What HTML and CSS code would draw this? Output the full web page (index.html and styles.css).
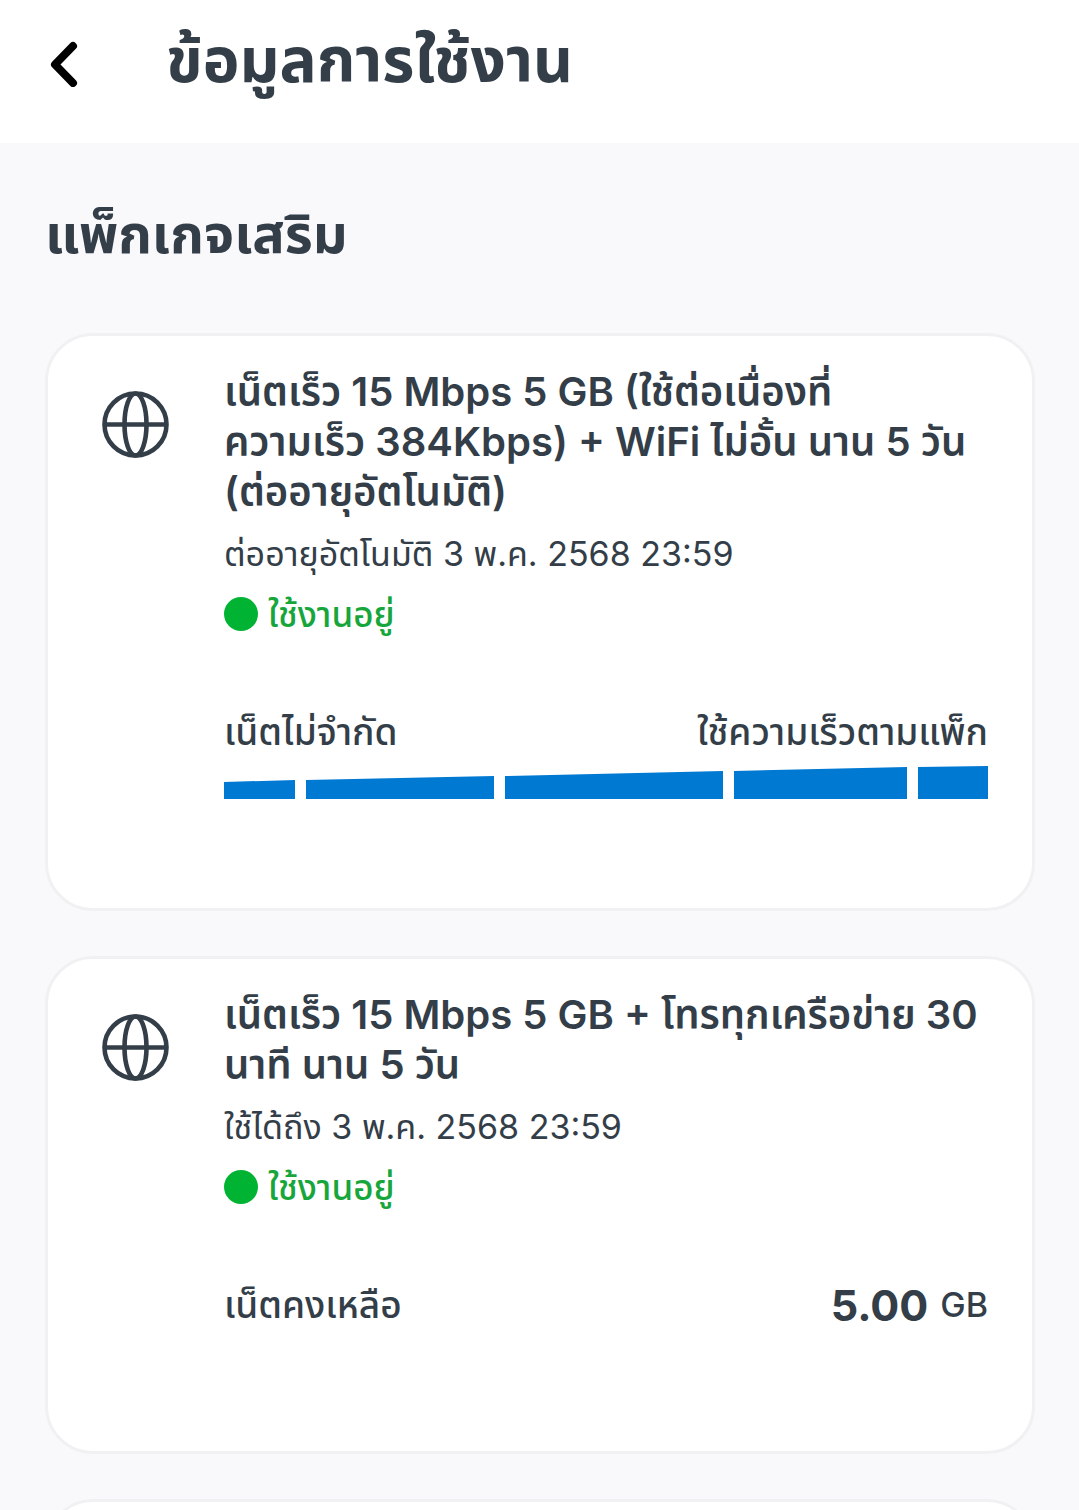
FILE: index.html
```html
<!DOCTYPE html>
<html lang="th">
<head>
  <meta charset="UTF-8" />
  <title>ข้อมูลการใช้งาน</title>
  <meta name="viewport" content="width=device-width, initial-scale=1" />
  <link rel="stylesheet" href="styles.css">
</head>
<body>
  <header class="top-bar">
    <button class="back" type="button" aria-label="ย้อนกลับ">
      <svg width="28" height="46" viewBox="0 0 28 46" fill="none" stroke="#000" stroke-width="8" stroke-linecap="round" stroke-linejoin="round">
        <path d="M23 5L5 23.500L23 42" />
      </svg>
    </button>
    <h1>ข้อมูลการใช้งาน</h1>
  </header>
  <main class="content">
    <h2>แพ็กเกจเสริม</h2>
    <section class="card">
      <svg class="globe" viewBox="0 0 68 68" fill="none" stroke="#333e48" stroke-width="4.600">
        <circle cx="33.500" cy="34.500" r="31" />
        <ellipse cx="33.500" cy="34.500" rx="11" ry="31" />
        <path d="M2.500 34.500H64.500" />
      </svg>
      <div class="details">
        <h3>เน็ตเร็ว 15 Mbps 5 GB (ใช้ต่อเนื่องที่<br />ความเร็ว 384Kbps) + WiFi ไม่อั้น นาน 5 วัน<br />(ต่ออายุอัตโนมัติ)</h3>
        <p class="expiry">ต่ออายุอัตโนมัติ 3 พ.ค. 2568 23:59</p>
        <p class="status"><span class="dot"></span>ใช้งานอยู่</p>
        <div class="usage">
          <span>เน็ตไม่จำกัด</span>
          <span>ใช้ความเร็วตามแพ็ก</span>
        </div>
        <svg class="speed" viewBox="0 0 764 33" preserveAspectRatio="none" fill="#0079d3">
          <path d="M0 16L71 14V33H0Z" />
          <path d="M82 14L270 10V33H82Z" />
          <path d="M281 10L499 5V33H281Z" />
          <path d="M510 5L683 1V33H510Z" />
          <path d="M694 1L764 0V33H694Z" />
        </svg>
      </div>
    </section>
    <section class="card">
      <svg class="globe" viewBox="0 0 68 68" fill="none" stroke="#333e48" stroke-width="4.600">
        <circle cx="33.500" cy="34.500" r="31" />
        <ellipse cx="33.500" cy="34.500" rx="11" ry="31" />
        <path d="M2.500 34.500H64.500" />
      </svg>
      <div class="details">
        <h3>เน็ตเร็ว 15 Mbps 5 GB + โทรทุกเครือข่าย 30<br />นาที นาน 5 วัน</h3>
        <p class="expiry">ใช้ได้ถึง 3 พ.ค. 2568 23:59</p>
        <p class="status"><span class="dot"></span>ใช้งานอยู่</p>
        <div class="usage">
          <span>เน็ตคงเหลือ</span>
          <span class="left"><strong>5.00</strong> GB</span>
        </div>
      </div>
    </section>
    <section class="card"></section>
  </main>
</body>
</html>
```

FILE: styles.css
```css
* {
  box-sizing: border-box;
}
body {
  display: flex;
  flex-direction: column;
  height: 100vh;
  margin: 0;
  overflow: hidden;
  background: #f9f9fc;
  color: #333e48;
  font-family: Inter, 'Noto Sans Thai', 'Noto Sans', sans-serif;
}
h1, h2, h3, p {
  margin: 0;
}
.top-bar {
  display: flex;
  flex-shrink: 0;
  align-items: center;
  gap: 88px;
  padding: 20px 50px 43px;
  background: #fff;
}
.back {
  display: flex;
  padding: 8px 0 0;
  border: 0;
  background: none;
  cursor: pointer;
}
h1 {
  font-size: 62px;
  line-height: 80px;
}
.content {
  display: flex;
  flex: 1;
  flex-direction: column;
  gap: 45px;
  min-height: 0;
  padding: 56px 44px 0 45px;
  overflow: hidden;
}
h2 {
  margin-bottom: 19px;
  font-size: 54px;
  line-height: 70px;
}
.card {
  display: flex;
  flex-shrink: 0;
  align-items: flex-start;
  gap: 54px;
  min-height: 180px;
  padding: 31px 44px 121px 54px;
  background: #fff;
  border: 3px solid #f1f1f3;
  border-radius: 48px;
}
.globe {
  flex-shrink: 0;
  width: 68px;
  height: 68px;
  margin-top: 23px;
}
.details {
  flex: 1;
}
h3 {
  font-size: 40px;
  font-weight: 600;
  line-height: 50px;
  white-space: nowrap;
}
.expiry {
  margin-top: 12px;
  font-size: 34px;
  line-height: 50px;
}
.status {
  display: flex;
  align-items: center;
  gap: 10px;
  margin-top: 10px;
  color: #17a63b;
  font-size: 35px;
  font-weight: 500;
  line-height: 50px;
}
.dot {
  width: 34px;
  height: 34px;
  border-radius: 50%;
  background: #00b333;
}
.usage {
  display: flex;
  align-items: center;
  justify-content: space-between;
  margin-top: 68px;
  font-size: 37px;
  font-weight: 500;
  line-height: 50px;
}
.left {
  display: flex;
  align-items: center;
  gap: 12px;
  font-size: 34px;
}
.left strong {
  font-size: 43px;
}
.speed {
  display: block;
  width: 100%;
  height: 33px;
  margin: 9px 0 -12px;
}
```
